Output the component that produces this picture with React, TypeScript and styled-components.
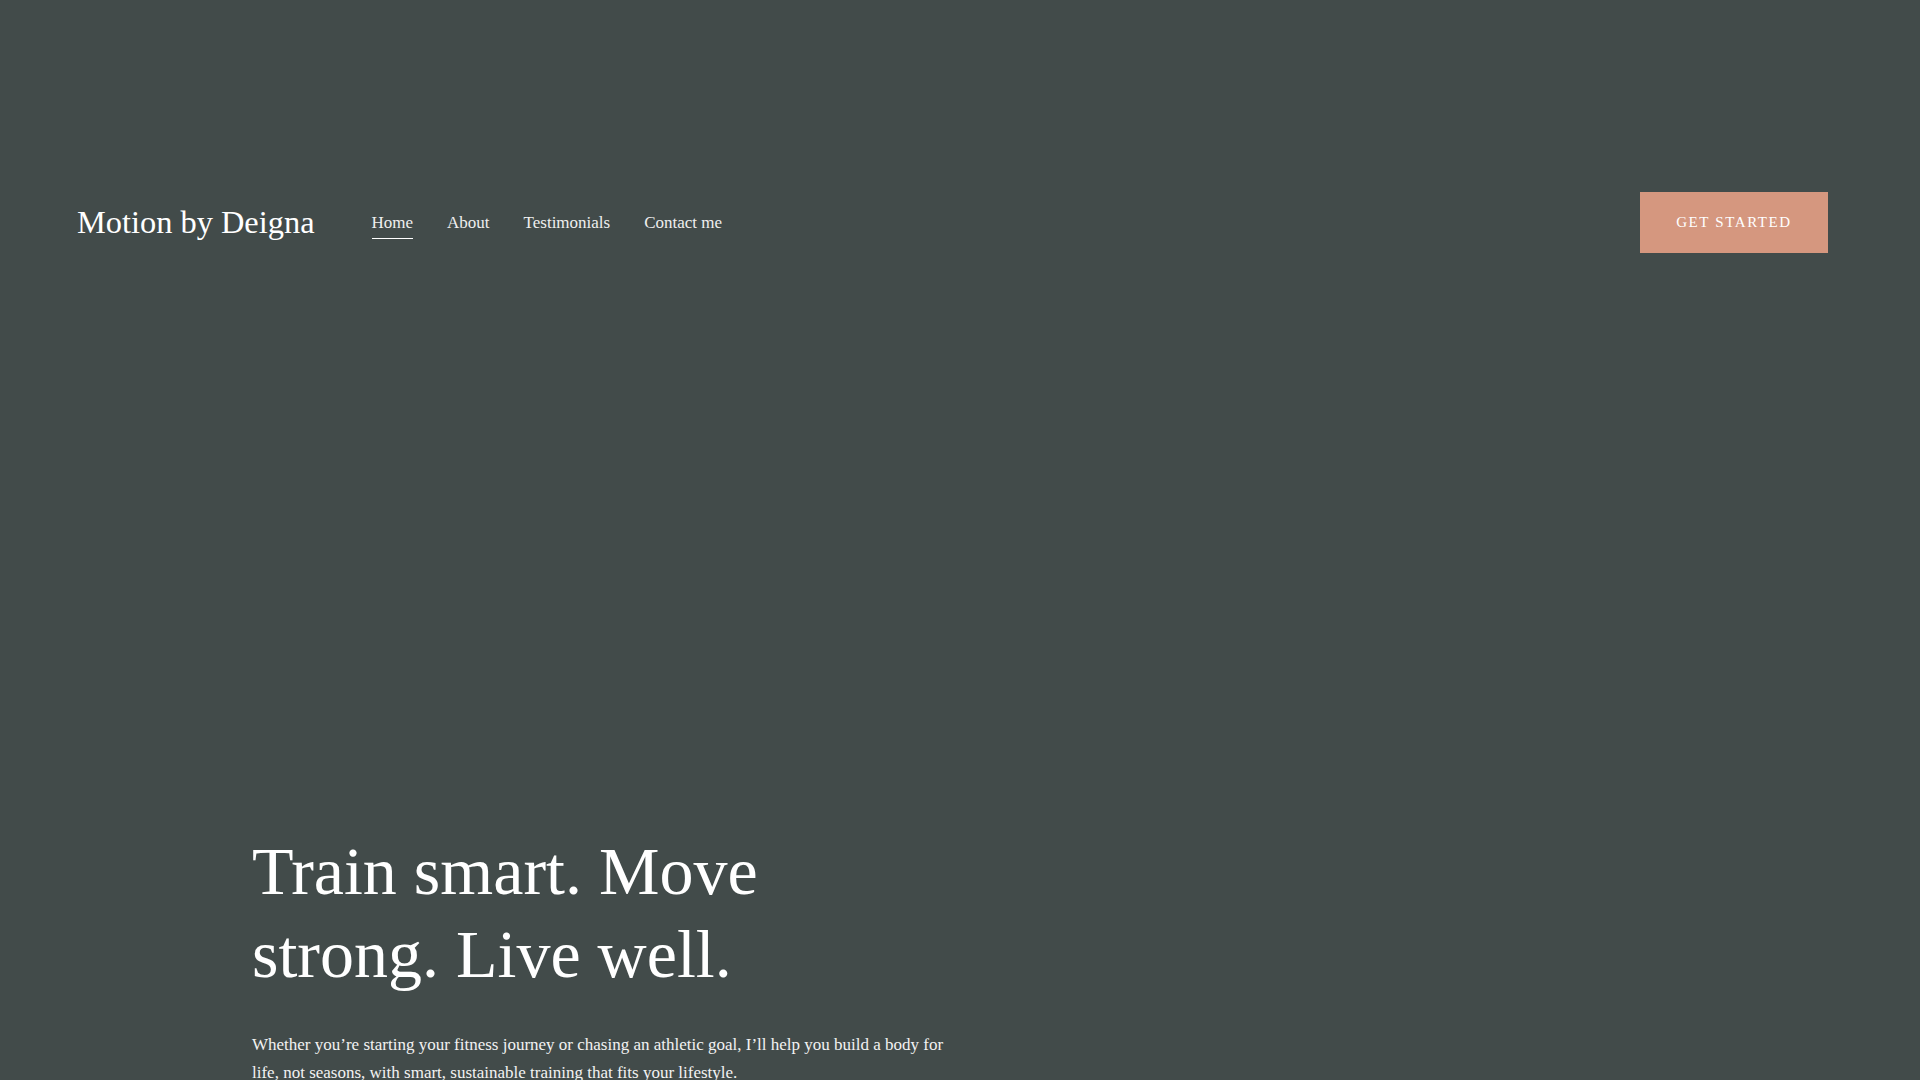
import styled, { createGlobalStyle } from 'styled-components'

const GlobalStyle = createGlobalStyle`
  html, body {
    margin: 0;
    padding: 0;
    background: #424b4a;
  }

  body {
    font-family: "Liberation Serif", "Times New Roman", serif;
    color: #ffffff;
  }

  * {
    box-sizing: border-box;
  }
`

// the reference was taken with a 15px classic scrollbar, so the usable width is 1905
const Page = styled.div`
  min-height: 2000px;
  padding-right: 15px;
  background: #424b4a;
`

const Header = styled.header`
  display: flex;
  align-items: center;
  padding: 192px 77px 0;
`

const Logo = styled.a`
  font-size: 32.4px;
  color: #ffffff;
  text-decoration: none;
  white-space: nowrap;
  margin-right: 57px;
`

const Nav = styled.nav`
  display: flex;
  align-items: center;
  gap: 34px;
  flex: 1;
`

const NavLink = styled.a<{ $active?: boolean }>`
  position: relative;
  font-size: 17px;
  color: #efefef;
  text-decoration: none;

  &::after {
    content: '';
    position: absolute;
    left: 0;
    right: 0;
    bottom: -6px;
    height: 1px;
    background: #ffffff;
    opacity: ${(p) => (p.$active ? 1 : 0)};
  }
`

const CtaButton = styled.a`
  display: inline-flex;
  align-items: center;
  justify-content: center;
  width: 188px;
  height: 61px;
  background: #d5977f;
  color: #ffffff;
  font-size: 15px;
  letter-spacing: 1.6px;
  text-transform: uppercase;
  text-decoration: none;
`

const Hero = styled.section`
  padding: 577px 0 0 252px;
`

const Content = styled.div`
  max-width: 710px;
`

const Title = styled.h1`
  margin: 0;
  max-width: 680px;
  font-size: 68px;
  font-weight: 400;
  line-height: 83px;
  color: #ffffff;
`

const Lead = styled.p`
  margin: 35px 0 0;
  font-size: 17px;
  line-height: 28px;
  color: #f2f2f2;
`

const links = ['Home', 'About', 'Testimonials', 'Contact me']

export default function App() {
  return (
    <>
      <GlobalStyle />
      <Page>
        <Header>
          <Logo href="#">Motion by Deigna</Logo>
          <Nav>
            {links.map((l, i) => (
              <NavLink key={l} href="#" $active={i === 0}>
                {l}
              </NavLink>
            ))}
          </Nav>
          <CtaButton href="#">Get started</CtaButton>
        </Header>
        <Hero>
          <Content>
            <Title>Train smart. Move strong. Live well.</Title>
            <Lead>
              Whether you’re starting your fitness journey or chasing an athletic goal, I’ll help you
              build a body for life, not seasons, with smart, sustainable training that fits your
              lifestyle.
            </Lead>
          </Content>
        </Hero>
      </Page>
    </>
  )
}
